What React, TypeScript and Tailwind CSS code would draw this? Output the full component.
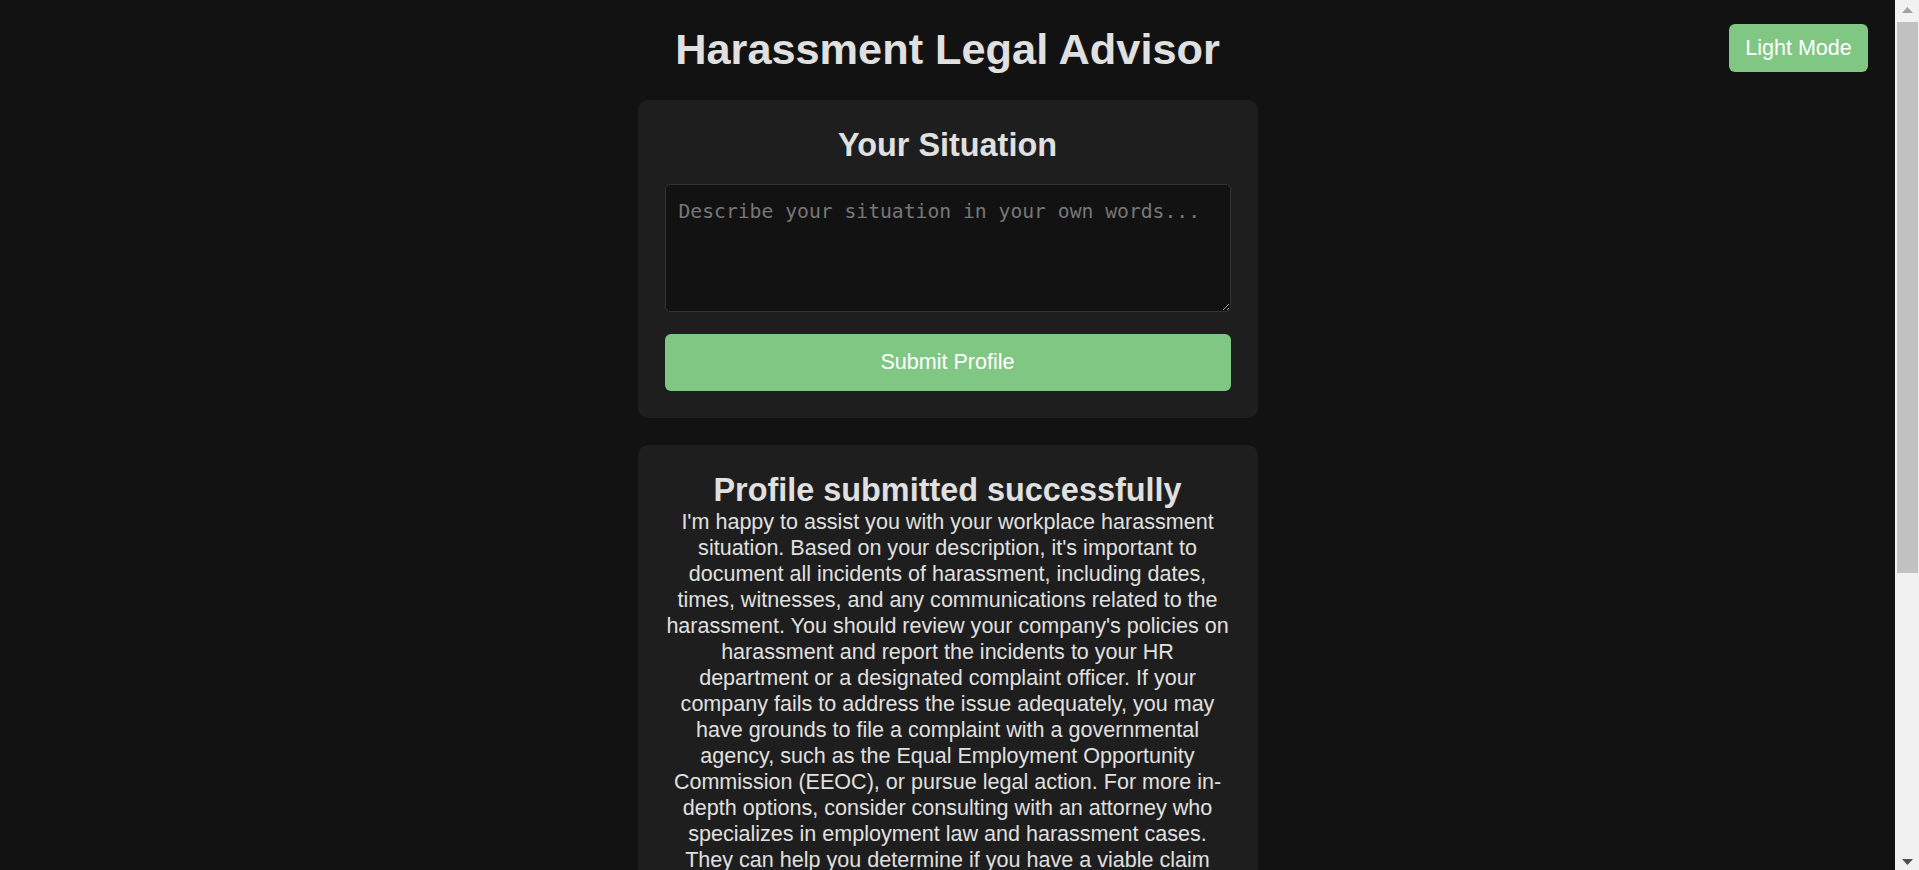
import { useState } from 'react'

const ADVICE =
  "I'm happy to assist you with your workplace harassment situation. Based on your description, it's important to document all incidents of harassment, including dates, times, witnesses, and any communications related to the harassment. You should review your company's policies on harassment and report the incidents to your HR department or a designated complaint officer. If your company fails to address the issue adequately, you may have grounds to file a complaint with a governmental agency, such as the Equal Employment Opportunity Commission (EEOC), or pursue legal action. For more in-depth options, consider consulting with an attorney who specializes in employment law and harassment cases. They can help you determine if you have a viable claim and guide you through the legal process, including the deadlines for filing a charge, which are often 180 or 300 days from the last incident. Keep copies of all evidence outside of your work accounts and devices, and note the names of any coworkers who witnessed the behavior. Remember that it is illegal for your employer to retaliate against you for reporting harassment in good faith or for taking part in an investigation. If you experience retaliation, such as demotion, reduced hours or termination, document it as well, since it may give rise to a separate claim. Please note that this information is general in nature and is not a substitute for advice from a qualified attorney."

// window scrollbar as it appears in the screenshot
function Scrollbar() {
  return (
    <div className="fixed top-0 right-0 h-screen w-[24px] bg-[#f1f1f1]">
      <svg className="absolute left-[7px] top-[7px]" width="11" height="6" viewBox="0 0 11 6">
        <path d="M5.5 0L11 6H0z" fill="#a3a3a3" />
      </svg>
      <div className="absolute left-[2px] right-[1px] top-[22px] h-[551px] bg-[#c1c1c1]" />
      <svg className="absolute left-[7px] bottom-[5px]" width="11" height="6" viewBox="0 0 11 6">
        <path d="M0 0H11L5.5 6z" fill="#505050" />
      </svg>
    </div>
  )
}

export default function App() {
  const [situation, setSituation] = useState('')

  return (
    <div className="min-h-screen bg-[#121212] text-[#e0e0e0] font-['Liberation_Sans',Arial,sans-serif]">
      <div className="relative mr-[24px] pt-[25px] pb-[27px]">
        {/* theme toggle */}
        <button className="absolute top-[24px] right-[27px] h-[48px] w-[139px] rounded-[6px] bg-[#81c784] text-white text-[21.55px] leading-none">
          Light Mode
        </button>

        <h1 className="text-center text-[43.3px] leading-[49px] font-bold">Harassment Legal Advisor</h1>

        <div className="mx-auto mt-[26px] w-[620px] flex flex-col gap-[27px]">
          <div className="bg-[#1e1e1e] rounded-[10px] p-[27px] text-center">
            <h2 className="text-[32.4px] leading-[37px] font-bold mb-[20px]">Your Situation</h2>
            <textarea
              value={situation}
              onChange={e => setSituation(e.target.value)}
              placeholder="Describe your situation in your own words..."
              className="block w-full h-[128px] bg-[#121212] border border-[#333333] rounded-[5px] px-[13px] pt-[15px] text-[19.7px] leading-[23px] text-[#e0e0e0] placeholder:text-[#777777] font-['DejaVu_Sans_Mono',monospace] outline-none"
            />
            <button className="mt-[22px] w-full h-[57px] rounded-[6px] bg-[#81c784] text-white text-[21.55px]">
              Submit Profile
            </button>
          </div>

          <div className="bg-[#1e1e1e] rounded-[10px] p-[27px] text-center">
            <h2 className="text-[32.4px] leading-[37px] font-bold">Profile submitted successfully</h2>
            <p className="text-[21.55px] leading-[26px]">{ADVICE}</p>
          </div>
        </div>
      </div>
      <Scrollbar />
    </div>
  )
}
